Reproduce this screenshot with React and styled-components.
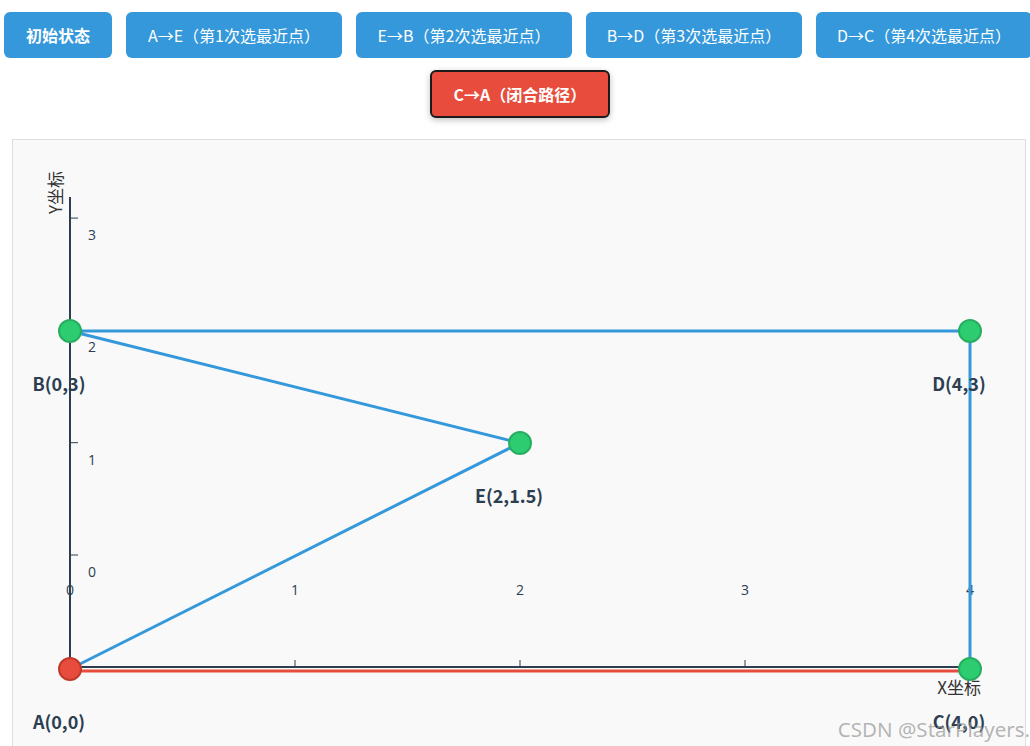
import React from 'react';
import styled, { createGlobalStyle } from 'styled-components';

const GlobalStyle = createGlobalStyle`
    body {
        margin: 0;
        background: #fff;
        font-family: "Noto Sans CJK SC", "Noto Sans", sans-serif;
        overflow: hidden;
    }
`

const steps = [
    { label: '初始状态', bold: true },
    { label: 'A→E（第1次选最近点）' },
    { label: 'E→B（第2次选最近点）' },
    { label: 'B→D（第3次选最近点）' },
    { label: 'D→C（第4次选最近点）' },
    { label: 'C→A（闭合路径）', active: true },
]

// point positions in page pixels
const pts = {
    A: { x: 70, y: 669, label: 'A(0,0)' },
    B: { x: 70, y: 331, label: 'B(0,3)' },
    C: { x: 970, y: 669, label: 'C(4,0)' },
    D: { x: 970, y: 331, label: 'D(4,3)' },
    E: { x: 520, y: 443, label: 'E(2,1.5)' },
}

const bluePath = ['A', 'E', 'B', 'D', 'C']

const xTicks = [0, 1, 2, 3, 4]
const yTicks = [0, 1, 2, 3]

function App() {
    return (
        <Page>
            <GlobalStyle />
            <ButtonBar>
                {steps.map((s) => (
                    <StepButton key={s.label} $bold={s.bold} $active={s.active}>{s.label}</StepButton>
                ))}
            </ButtonBar>

            <ChartBox>
                <svg width="1012" height="620" viewBox="13 140 1012 620">
                    {/* axes */}
                    <line x1="70" y1="197" x2="70" y2="668" stroke="#2c3e50" strokeWidth="2" />
                    <line x1="69" y1="667" x2="972" y2="667" stroke="#2c3e50" strokeWidth="2" />

                    {xTicks.map((t) => (
                        <g key={'x' + t}>
                            <line x1={70 + t * 225} y1="660" x2={70 + t * 225} y2="667" stroke="#2c3e50" strokeWidth="1" />
                            <TickText x={70 + t * 225} y="595" textAnchor="middle">{t}</TickText>
                        </g>
                    ))}
                    {yTicks.map((t) => (
                        <g key={'y' + t}>
                            <line x1="70" y1={555 - t * 112.3} x2="78" y2={555 - t * 112.3} stroke="#2c3e50" strokeWidth="1" />
                            <TickText x="88" y={577 - t * 112.3}>{t}</TickText>
                        </g>
                    ))}

                    <AxisText x="981" y="694" textAnchor="end">X坐标</AxisText>
                    <AxisText x="62" y="171" textAnchor="end" transform="rotate(-90 62 171)">
                        Y坐标
                    </AxisText>

                    {/* closing edge */}
                    <line x1="70" y1="671" x2="970" y2="671" stroke="#e74c3c" strokeWidth="3" />

                    <polyline
                        points={bluePath.map((k) => `${pts[k].x},${pts[k].y}`).join(' ')}
                        fill="none"
                        stroke="#3498db"
                        strokeWidth="3"
                    />

                    {Object.entries(pts).map(([k, p]) => (
                        <g key={k}>
                            <circle
                                cx={p.x}
                                cy={p.y}
                                r="11"
                                fill={k === 'A' ? '#e74c3c' : '#2ecc71'}
                                stroke={k === 'A' ? '#c0392b' : '#27ae60'}
                                strokeWidth="2"
                            />
                            <PointText x={p.x - 11} y={p.y + 60} textAnchor="middle">{p.label}</PointText>
                        </g>
                    ))}
                </svg>
            </ChartBox>

            <Watermark>CSDN @StarPlayers.</Watermark>
        </Page>
    )
}

const Page = styled.div`
    position: relative;
    width: 1030px;
    height: 746px;
    overflow: hidden;
`

const ButtonBar = styled.div`
    display: flex;
    flex-wrap: wrap;
    justify-content: center;
    gap: 12px 14px;
    width: 1036px;
    padding-top: 12px;
`

const StepButton = styled.button`
    box-sizing: border-box;
    height: ${(p) => (p.$active ? '48px' : '46px')};
    width: ${(p) => (p.$bold ? '108px' : p.$active ? '180px' : '216px')};
    padding: 0;
    margin-left: ${(p) => (p.$active ? '4px' : '0')};
    border: ${(p) => (p.$active ? '2px solid #1b1b1b' : 'none')};
    border-radius: 6px;
    background: ${(p) => (p.$active ? '#e74c3c' : '#3498db')};
    color: #fff;
    font-family: "Noto Sans CJK SC", "Noto Sans", sans-serif;
    font-size: 16px;
    font-weight: ${(p) => (p.$bold || p.$active ? 700 : 400)};
    box-shadow: ${(p) => (p.$active ? '0 2px 6px rgba(0,0,0,0.25)' : 'none')};
    cursor: pointer;
    white-space: nowrap;
`

const ChartBox = styled.div`
    margin: 21px 0 0 12px;
    width: 1012px;
    height: 620px;
    border: 1px solid #ddd;
    background: #f9f9f9;
    overflow: hidden;
    svg {
        display: block;
    }
`

const TickText = styled.text`
    font-family: "Open Sans", "Noto Sans", sans-serif;
    font-size: 14px;
    fill: #2c3e50;
`

const AxisText = styled.text`
    font-family: "Noto Sans CJK SC", "Noto Sans", sans-serif;
    font-size: 17px;
    fill: #333;
`

const PointText = styled.text`
    font-family: "Noto Sans CJK SC", "Noto Sans", sans-serif;
    font-size: 18px;
    font-weight: 700;
    fill: #2c3e50;
`

const Watermark = styled.div`
    position: absolute;
    right: 0;
    bottom: 3px;
    font-family: "Noto Sans", sans-serif;
    font-size: 20.5px;
    color: rgba(150, 150, 150, 0.7);
    pointer-events: none;
`

export default App;
